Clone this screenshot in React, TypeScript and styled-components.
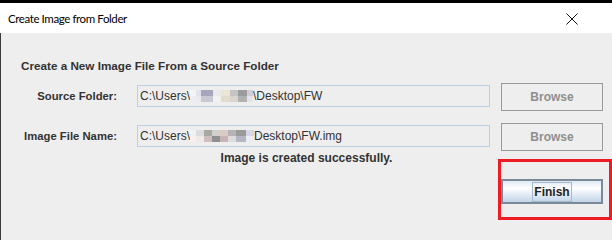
import React from 'react'
import styled, { createGlobalStyle } from 'styled-components'

const GlobalStyle = createGlobalStyle`
  html, body {
    margin: 0;
    padding: 0;
    background: #eeeeee;
  }
  body {
    width: 612px;
    height: 240px;
    overflow: hidden;
    font-family: "Liberation Sans", Arial, sans-serif;
  }
`

type Cell = [number, string, string]

const sourceBlur: Cell[] = [
  [6, '#f4f4f6', '#eeeeee'],
  [5, '#e2e2ea', '#ebebef'],
  [12, '#a6a6ba', '#c9c9d4'],
  [8, '#e9e9ec', '#f1f1f1'],
  [9, '#ece4d4', '#e2dccf'],
  [8, '#c4c4c4', '#d9d4cc'],
  [9, '#9c9c9c', '#b1b1b1'],
  [6, '#cfcfd7', '#e4e4e8']
]

const imageBlur: Cell[] = [
  [6, '#f1f1f1', '#f6f0ee'],
  [8, '#dcdcdc', '#efe9e7'],
  [8, '#a8a8a0', '#cdbdbd'],
  [8, '#cfd0cc', '#8f8f8f'],
  [8, '#d9cbc4', '#c8b3b6'],
  [8, '#b4b4b4', '#dcdcdc'],
  [10, '#9a9a9a', '#b5b5c3'],
  [8, '#d6d6e6', '#ececf3']
]

const Redacted = ({ cells }: { cells: Cell[] }) => (
  <Blur>
    {cells.map(([w, top, bottom], i) => (
      <BlurCell key={i} $w={w} $top={top} $bottom={bottom} />
    ))}
  </Blur>
)

const CloseIcon = () => (
  <svg width="12" height="12" viewBox="0 0 12 12">
    <path d="M0.5 0.5 L11.5 11.5 M11.5 0.5 L0.5 11.5" stroke="#111" strokeWidth="1" fill="none" />
  </svg>
)

const App = () => {
  return (
    <>
      <GlobalStyle />
      <Window>
        <TopEdge />
        <TitleBar>
          <Title>Create Image from Folder</Title>
          <Close>
            <CloseIcon />
          </Close>
        </TitleBar>
        <Content>
          <Heading>Create a New Image File From a Source Folder</Heading>
          <Form>
            {/* source folder */}
            <Row>
              <Label>Source Folder:</Label>
              <Field>
                C:\Users\
                <Redacted cells={sourceBlur} />
                \Desktop\FW
              </Field>
              <BrowseButton disabled>Browse</BrowseButton>
            </Row>
            {/* image file */}
            <Row>
              <Label>Image File Name:</Label>
              <Field>
                C:\Users\
                <Redacted cells={imageBlur} />
                Desktop\FW.img
              </Field>
              <BrowseButton disabled>Browse</BrowseButton>
            </Row>
          </Form>
          <Status>Image is created successfully.</Status>
          <Footer>
            <FinishWrap>
              <FinishButton>
                <FocusRing>Finish</FocusRing>
              </FinishButton>
              <Highlight />
            </FinishWrap>
          </Footer>
        </Content>
      </Window>
    </>
  )
}

export default App

const Window = styled.div`
  width: 612px;
  height: 240px;
  display: flex;
  flex-direction: column;
`

const TopEdge = styled.div`
  height: 3px;
  background: #000;
`

const TitleBar = styled.div`
  height: 30px;
  background: #fff;
  display: flex;
  align-items: center;
  padding: 0 34px 0 8px;
`

const Title = styled.div`
  font-family: Lato, "Noto Sans", sans-serif;
  font-size: 11.5px;
  letter-spacing: -0.4px;
  color: #000;
  padding-top: 1px;
`

const Close = styled.div`
  margin-left: auto;
  display: flex;
  padding-top: 2px;
`

const Content = styled.div`
  flex: 1;
  background: #eeeeee;
  border-left: 1px solid #3a3a3a;
  padding: 25px 9px 0 20px;
  display: flex;
  flex-direction: column;
  color: #333;
`

const Heading = styled.div`
  font-size: 11.7px;
  font-weight: bold;
  line-height: 16px;
`

const Form = styled.div`
  margin-top: 9px;
  display: flex;
  flex-direction: column;
  gap: 12px;
`

const Row = styled.div`
  height: 28px;
  display: flex;
  align-items: flex-start;
`

const Label = styled.div`
  width: 96px;
  text-align: right;
  font-size: 11.3px;
  font-weight: bold;
  line-height: 16px;
  margin-top: 5px;
  white-space: nowrap;
`

const Field = styled.div`
  box-sizing: border-box;
  width: 353px;
  height: 22px;
  margin: 2px 0 0 20px;
  padding: 0 2px;
  border: 1px solid #b8cfe5;
  display: flex;
  align-items: center;
  font-size: 12px;
  color: #333;
  white-space: pre;
`

const Blur = styled.span`
  display: inline-flex;
  height: 12px;
`

const BlurCell = styled.span<{ $w: number; $top: string; $bottom: string }>`
  width: ${p => p.$w}px;
  height: 12px;
  background: linear-gradient(${p => p.$top} 50%, ${p => p.$bottom} 50%);
`

const BrowseButton = styled.button`
  box-sizing: border-box;
  width: 102px;
  height: 28px;
  margin-left: 11px;
  border: 1px solid #9a9a9a;
  background: transparent;
  color: #8e8e8e;
  font-family: "Liberation Sans", Arial, sans-serif;
  font-size: 12px;
  font-weight: bold;
  padding: 0;
`

const Status = styled.div`
  margin: 0 -9px 0 -20px;
  text-align: center;
  font-size: 12px;
  font-weight: bold;
  line-height: 14px;
`

const Footer = styled.div`
  margin-top: 14px;
  display: flex;
  justify-content: flex-end;
`

const FinishWrap = styled.div`
  position: relative;
  width: 102px;
  height: 25px;
`

const FinishButton = styled.button`
  box-sizing: border-box;
  width: 102px;
  height: 25px;
  padding: 0;
  border: 2px solid #7b8a99;
  background: linear-gradient(#dfe9f4 0%, #ffffff 35%, #e6eef7 60%, #c3d5e8 100%);
  display: flex;
  align-items: center;
  justify-content: center;
  font-family: "Liberation Sans", Arial, sans-serif;
  font-size: 12px;
  font-weight: bold;
  color: #222;
`

const FocusRing = styled.span`
  box-sizing: border-box;
  height: 20px;
  padding: 0 1px;
  border: 1px solid #a3b8cc;
  display: inline-flex;
  align-items: center;
`

const Highlight = styled.div`
  position: absolute;
  top: -20px;
  left: -3px;
  right: -9px;
  bottom: -16px;
  border: 3px solid #ed1c24;
  pointer-events: none;
`
